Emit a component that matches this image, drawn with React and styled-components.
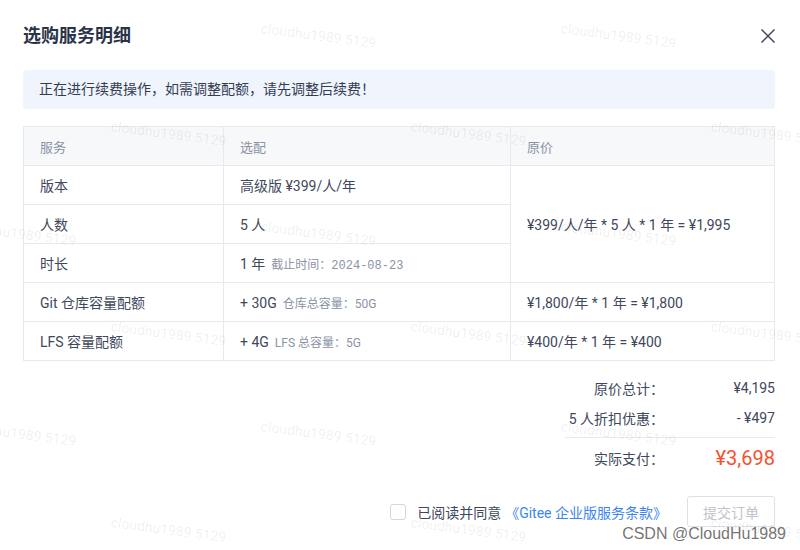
import styled, { createGlobalStyle } from "styled-components";

const GlobalStyle = createGlobalStyle`
  html, body {
    margin: 0;
    padding: 0;
    background: #fff;
  }
  body {
    font-family: Roboto, "Noto Sans CJK SC", sans-serif;
    color: #40485b;
  }
`;

const Dialog = styled.div`
  position: relative;
  width: 800px;
  height: 550px;
  box-sizing: border-box;
  padding: 0 25px 0 23px;
  background: #fff;
  overflow: hidden;
`;

const Header = styled.div`
  display: flex;
  align-items: center;
  justify-content: space-between;
  box-sizing: border-box;
  height: 70px;
  padding-bottom: 3px;
`;

const Title = styled.h2`
  margin: 0;
  font-size: 18px;
  font-weight: 700;
  color: #2a3448;
`;

const CloseButton = styled.button`
  display: flex;
  align-items: center;
  justify-content: center;
  width: 24px;
  height: 24px;
  padding: 0;
  margin: 4px -5px 0 0;
  border: none;
  background: none;
  color: #40485b;
`;

const Notice = styled.div`
  height: 39px;
  line-height: 39px;
  padding: 0 16px;
  border-radius: 4px;
  background: #f0f4fd;
  font-size: 14px;
  color: #333d52;
`;

const Table = styled.table`
  width: 100%;
  margin-top: 17px;
  border-collapse: collapse;
  table-layout: fixed;
  font-size: 14px;
  color: #40485b;
`;

const Th = styled.th`
  height: 38px;
  padding: 0 16px;
  border: 1px solid #e6e9ee;
  background: #f7f8fa;
  text-align: left;
  font-weight: 400;
  font-size: 13px;
  color: #8a93a5;
`;

const Td = styled.td`
  height: 38px;
  padding: 0 16px;
  border: 1px solid #e6e9ee;
  white-space: nowrap;
`;

const Hint = styled.span`
  margin-left: 6px;
  font-size: 12px;
  color: #8a93a5;
`;

const MonoDate = styled.span`
  font-family: "Liberation Mono", monospace;
  font-size: 12px;
`;

const Summary = styled.div`
  display: flex;
  flex-direction: column;
  align-items: flex-end;
  margin-top: 12px;
`;

const SummaryRow = styled.div`
  display: flex;
  justify-content: flex-end;
  align-items: center;
  height: 30px;
  font-size: 14px;
  color: #40485b;
  white-space: nowrap;
`;

const Label = styled.span`
  text-align: right;
`;

const Value = styled.span`
  width: 111px;
  text-align: right;
  color: ${(p) => (p.$accent ? "#f5532d" : "#40485b")};
  font-size: ${(p) => (p.$accent ? "20px" : "14px")};
`;

const Divider = styled.div`
  width: 210px;
  height: 1px;
  margin: 4px 0 5px;
  background: #e6e9ee;
`;

const Footer = styled.div`
  display: flex;
  align-items: center;
  justify-content: flex-end;
  margin-top: 23px;
  font-size: 14px;
`;

const Checkbox = styled.span`
  display: inline-block;
  width: 14px;
  height: 14px;
  border: 1px solid #d3d8e0;
  border-radius: 3px;
  margin-right: 11px;
`;

const AgreeText = styled.span`
  color: #40485b;
`;

const TermsLink = styled.a`
  margin-left: 4px;
  color: #3d85f2;
  text-decoration: none;
`;

const SubmitButton = styled.button`
  width: 88px;
  height: 31px;
  margin-left: 20px;
  border: 1px solid #dde1e7;
  border-radius: 3px;
  background: #fff;
  font-family: inherit;
  font-size: 14px;
  color: #bfc4cd;
`;

const WatermarkLayer = styled.div`
  position: absolute;
  inset: 0;
  pointer-events: none;
`;

const Mark = styled.span`
  position: absolute;
  font-family: Roboto, sans-serif;
  font-size: 14px;
  color: rgba(0, 0, 0, 0.07);
  white-space: nowrap;
  transform: rotate(7.5deg);
  transform-origin: left top;
`;

const Signature = styled.span`
  position: absolute;
  right: 14px;
  top: 525px;
  font-family: "Liberation Sans", Arial, sans-serif;
  font-size: 16px;
  color: rgba(90, 90, 90, 0.85);
  pointer-events: none;
`;

const marks = [
  [262, 20], [562, 20],
  [112, 118], [412, 118], [712, 118],
  [-38, 218], [262, 218], [562, 218],
  [112, 318], [412, 318], [712, 318],
  [-38, 418], [262, 418], [562, 418],
  [112, 514], [412, 514], [712, 514],
];

function CloseIcon() {
  return (
    <svg width="16" height="16" viewBox="0 0 16 16" fill="none">
      <path d="M1.5 1.5 L14.5 14.5 M14.5 1.5 L1.5 14.5" stroke="currentColor" strokeWidth="1.5" />
    </svg>
  );
}

export default function App() {
  return (
    <>
      <GlobalStyle />
      <Dialog>
        <Header>
          <Title>选购服务明细</Title>
          <CloseButton>
            <CloseIcon />
          </CloseButton>
        </Header>
        <Notice>正在进行续费操作，如需调整配额，请先调整后续费！</Notice>
        <Table>
          <colgroup>
            <col style={{ width: 200 }} />
            <col style={{ width: 287 }} />
            <col />
          </colgroup>
          <thead>
            <tr>
              <Th>服务</Th>
              <Th>选配</Th>
              <Th>原价</Th>
            </tr>
          </thead>
          <tbody>
            <tr>
              <Td>版本</Td>
              <Td>高级版 ¥399/人/年</Td>
              <Td rowSpan={3}>¥399/人/年 * 5 人 * 1 年 = ¥1,995</Td>
            </tr>
            <tr>
              <Td>人数</Td>
              <Td>5 人</Td>
            </tr>
            <tr>
              <Td>时长</Td>
              <Td>
                1 年<Hint>截止时间：<MonoDate>2024-08-23</MonoDate></Hint>
              </Td>
            </tr>
            <tr>
              <Td>Git 仓库容量配额</Td>
              <Td>
                + 30G<Hint>仓库总容量：50G</Hint>
              </Td>
              <Td>¥1,800/年 * 1 年 = ¥1,800</Td>
            </tr>
            <tr>
              <Td>LFS 容量配额</Td>
              <Td>
                + 4G<Hint>LFS 总容量：5G</Hint>
              </Td>
              <Td>¥400/年 * 1 年 = ¥400</Td>
            </tr>
          </tbody>
        </Table>
        <Summary>
          <SummaryRow>
            <Label>原价总计：</Label>
            <Value>¥4,195</Value>
          </SummaryRow>
          <SummaryRow>
            <Label>5 人折扣优惠：</Label>
            <Value>- ¥497</Value>
          </SummaryRow>
          <Divider />
          <SummaryRow>
            <Label>实际支付：</Label>
            <Value $accent>¥3,698</Value>
          </SummaryRow>
        </Summary>
        <Footer>
          <Checkbox />
          <AgreeText>已阅读并同意</AgreeText>
          <TermsLink href="#">《Gitee 企业版服务条款》</TermsLink>
          <SubmitButton disabled>提交订单</SubmitButton>
        </Footer>
        <WatermarkLayer>
          {marks.map(([x, y], i) => (
            <Mark key={i} style={{ left: x, top: y }}>
              cloudhu1989 5129
            </Mark>
          ))}
        </WatermarkLayer>
        <Signature>CSDN @CloudHu1989</Signature>
      </Dialog>
    </>
  );
}
